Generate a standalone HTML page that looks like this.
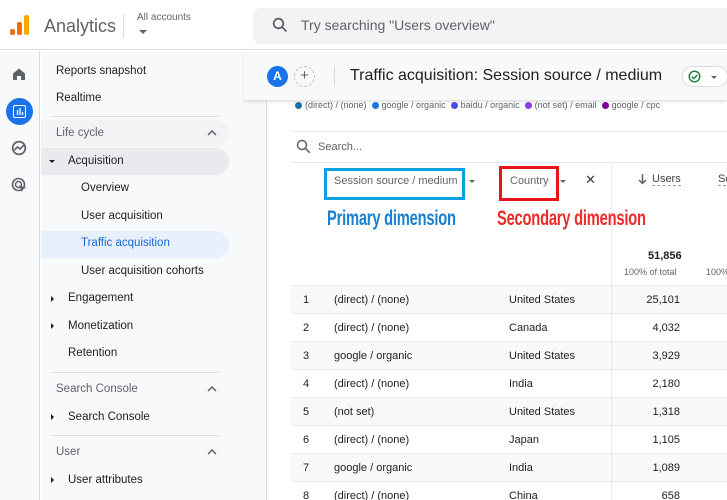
<!DOCTYPE html>
<html><head><style>
*{margin:0;padding:0;box-sizing:border-box}
html,body{width:727px;height:500px;overflow:hidden}
body{background:#fff;font-family:"Liberation Sans",Arial,sans-serif;color:#202124;position:relative}
.a{position:absolute;white-space:nowrap}
.nav{font-size:11.5px;color:#202124}
.sec{font-size:11.5px;color:#5f6368}
.row{position:absolute;left:291px;width:436px;height:28px;border-bottom:1px solid #e8eaed;font-size:11px}
.row span{position:absolute;top:8px}
.dot{display:inline-block;width:7px;height:7px;border-radius:50%;margin-right:3px;vertical-align:-0.5px}
.ann{font-size:21px;font-weight:bold;transform:scaleX(0.70);transform-origin:0 0;letter-spacing:-0.3px}
</style></head><body>
<div class="a" style="left:0;top:0;width:727px;height:50px;border-bottom:1px solid #dadce0;background:#fff"></div>
<div class="a" style="left:10px;top:29px;width:5px;height:6px;background:#e8710a;border-radius:2px"></div>
<div class="a" style="left:17px;top:22px;width:5px;height:13px;background:#e8710a;border-radius:2px"></div>
<div class="a" style="left:24px;top:15px;width:5px;height:20px;background:#f9ab00;border-radius:2px"></div>
<div class="a" style="left:44px;top:16px;font-size:18px;color:#5f6368">Analytics</div>
<div class="a" style="left:123px;top:14px;width:1px;height:24px;background:#dadce0"></div>
<div class="a" style="left:137px;top:12px;font-size:10px;color:#5f6368">All accounts</div>
<div class="a" style="left:139px;top:30px;width:0;height:0;border-left:4px solid transparent;border-right:4px solid transparent;border-top:4px solid #5f6368"></div>
<div class="a" style="left:253px;top:8px;width:474px;height:36px;background:#f1f3f4;border-radius:8px 0 0 8px"></div>
<svg class="a" style="left:272px;top:17px" width="16" height="16" viewBox="0 0 16 16"><circle cx="6.5" cy="6.5" r="4.8" fill="none" stroke="#5f6368" stroke-width="1.8"/><path d="M10 10l4.5 4.5" stroke="#5f6368" stroke-width="1.8"/></svg>
<div class="a" style="left:301px;top:17px;font-size:14px;color:#5f6368">Try searching "Users overview"</div>
<div class="a" style="left:0;top:51px;width:40px;height:449px;background:#f8f9fa;border-right:1px solid #dadce0"></div>
<svg class="a" style="left:12px;top:67px" width="14" height="14" viewBox="0 0 14 14"><path d="M1 6.5L7 1.5 13 6.5V13H9V9H5V13H1z" fill="#5f6368"/></svg>
<div class="a" style="left:6px;top:98px;width:27px;height:27px;border-radius:50%;background:#1a73e8"></div>
<div class="a" style="left:13px;top:105px;width:13px;height:13px;border:1.5px solid #fff;border-radius:2px"></div>
<svg class="a" style="left:16px;top:107px" width="8" height="8"><path d="M1.5 8V3M4 8V1M6.5 8V5" stroke="#fff" stroke-width="1.3"/></svg>
<svg class="a" style="left:11px;top:140px" width="17" height="17" viewBox="0 0 17 17"><circle cx="8" cy="8" r="6.3" fill="none" stroke="#5f6368" stroke-width="1.8"/><path d="M3.5 10l3-3 2.5 2 4-4" fill="none" stroke="#5f6368" stroke-width="1.6"/></svg>
<svg class="a" style="left:11px;top:177px" width="17" height="17" viewBox="0 0 17 17"><circle cx="7.5" cy="7.5" r="6" fill="none" stroke="#5f6368" stroke-width="1.6"/><circle cx="7.5" cy="7.5" r="3" fill="none" stroke="#5f6368" stroke-width="1.5"/><path d="M8 8l7 3-3 1-1 3z" fill="#5f6368"/></svg>
<div class="a" style="left:41px;top:51px;width:226px;height:449px;background:#f8f9fa;border-right:1px solid #dadce0"></div>
<div class="a nav" style="left:56px;top:65px">Reports snapshot</div>
<div class="a nav" style="left:56px;top:92px">Realtime</div>
<div class="a" style="left:50px;top:116px;width:169px;height:1px;background:#e0e0e0"></div>
<div class="a" style="left:41px;top:120px;width:188px;height:27px;background:#f1f3f4;border-radius:0 14px 14px 0"></div>
<div class="a sec" style="left:56px;top:127px">Life cycle</div>
<svg class="a" style="left:207px;top:130px" width="10" height="6"><path d="M1 5l4-4 4 4" fill="none" stroke="#5f6368" stroke-width="1.5"/></svg>
<div class="a" style="left:41px;top:148px;width:188px;height:27px;background:#e8eaed;border-radius:0 14px 14px 0"></div>
<div class="a" style="left:49px;top:160px;border-left:3px solid transparent;border-right:3px solid transparent;border-top:3px solid #202124"></div>
<div class="a nav" style="left:68px;top:155px">Acquisition</div>
<div class="a nav" style="left:81px;top:182px">Overview</div>
<div class="a nav" style="left:81px;top:210px">User acquisition</div>
<div class="a" style="left:41px;top:231px;width:188px;height:27px;background:#e8f0fe;border-radius:0 14px 14px 0"></div>
<div class="a nav" style="left:81px;top:237px;color:#1967d2">Traffic acquisition</div>
<div class="a nav" style="left:81px;top:265px">User acquisition cohorts</div>
<div class="a" style="left:51px;top:296px;border-top:3px solid transparent;border-bottom:3px solid transparent;border-left:3px solid #202124"></div>
<div class="a nav" style="left:68px;top:292px">Engagement</div>
<div class="a" style="left:51px;top:323px;border-top:3px solid transparent;border-bottom:3px solid transparent;border-left:3px solid #202124"></div>
<div class="a nav" style="left:68px;top:320px">Monetization</div>
<div class="a nav" style="left:68px;top:347px">Retention</div>
<div class="a" style="left:50px;top:372px;width:169px;height:1px;background:#e0e0e0"></div>
<div class="a sec" style="left:56px;top:383px">Search Console</div>
<svg class="a" style="left:207px;top:386px" width="10" height="6"><path d="M1 5l4-4 4 4" fill="none" stroke="#5f6368" stroke-width="1.5"/></svg>
<div class="a" style="left:51px;top:414px;border-top:3px solid transparent;border-bottom:3px solid transparent;border-left:3px solid #202124"></div>
<div class="a nav" style="left:68px;top:411px">Search Console</div>
<div class="a" style="left:50px;top:435px;width:169px;height:1px;background:#e0e0e0"></div>
<div class="a sec" style="left:56px;top:446px">User</div>
<svg class="a" style="left:207px;top:449px" width="10" height="6"><path d="M1 5l4-4 4 4" fill="none" stroke="#5f6368" stroke-width="1.5"/></svg>
<div class="a" style="left:51px;top:477px;border-top:3px solid transparent;border-bottom:3px solid transparent;border-left:3px solid #202124"></div>
<div class="a nav" style="left:68px;top:474px">User attributes</div>
<div class="a" style="left:244px;top:51px;width:483px;height:49px;background:#f8f9fa;box-shadow:0 2px 3px rgba(0,0,0,0.12)"></div>
<div class="a" style="left:267px;top:66px;width:21px;height:21px;border-radius:50%;background:#1a73e8;color:#fff;font-size:12px;font-weight:bold;text-align:center;line-height:21px">A</div>
<div class="a" style="left:294px;top:66px;width:21px;height:21px;border-radius:50%;border:1px dashed #bdc1c6;color:#5f6368;font-size:15px;text-align:center;line-height:18px">+</div>
<div class="a" style="left:334px;top:66px;width:1px;height:20px;background:#dadce0"></div>
<div class="a" style="left:350px;top:67px;font-size:16px;color:#202124">Traffic acquisition: Session source / medium</div>
<div class="a" style="left:682px;top:66px;width:46px;height:21px;border:1px solid #dadce0;border-radius:11px;background:#fff"></div>
<svg class="a" style="left:688px;top:70px" width="13" height="13"><circle cx="6.5" cy="6.5" r="5.3" fill="none" stroke="#188038" stroke-width="1.4"/><path d="M3.8 6.6l2 2 3.5-3.6" fill="none" stroke="#188038" stroke-width="1.4"/></svg>
<div class="a" style="left:711px;top:76px;border-left:3px solid transparent;border-right:3px solid transparent;border-top:3px solid #5f6368"></div>
<div class="a" style="left:295px;top:100px;font-size:9px;color:#5f6368">
<span class="dot" style="background:#1a73a8"></span>(direct) / (none) &nbsp;<span class="dot" style="background:#1a73e8"></span>google / organic &nbsp;<span class="dot" style="background:#4a4ae8"></span>baidu / organic &nbsp;<span class="dot" style="background:#8a3ee0"></span>(not set) / email &nbsp;<span class="dot" style="background:#7b0099"></span>google / cpc</div>
<div class="a" style="left:291px;top:131px;width:436px;height:1px;background:#e8eaed"></div>
<svg class="a" style="left:296px;top:139px" width="15" height="15" viewBox="0 0 15 15"><circle cx="6" cy="6" r="4.5" fill="none" stroke="#5f6368" stroke-width="1.5"/><path d="M9.3 9.3l4.5 4.5" stroke="#5f6368" stroke-width="1.5"/></svg>
<div class="a" style="left:318px;top:141px;font-size:11px;color:#5f6368">Search...</div>
<div class="a" style="left:291px;top:162px;width:436px;height:1px;background:#e8eaed"></div>
<div class="a" style="left:611px;top:163px;width:1px;height:337px;background:#e8eaed"></div>
<div class="a" style="left:324px;top:168px;width:141px;height:32px;border:3px solid #0ba0e0"></div>
<div class="a" style="left:334px;top:175px;font-size:11px;color:#5f6368">Session source / medium</div>
<div class="a" style="left:469px;top:180px;border-left:3px solid transparent;border-right:3px solid transparent;border-top:3px solid #5f6368"></div>
<div class="a" style="left:499px;top:166px;width:60px;height:35px;border:3px solid #e8141c"></div>
<div class="a" style="left:510px;top:175px;font-size:11px;color:#5f6368">Country</div>
<div class="a" style="left:560px;top:180px;border-left:3px solid transparent;border-right:3px solid transparent;border-top:3px solid #5f6368"></div>
<div class="a" style="left:585px;top:172px;font-size:13px;color:#3c4043">&#x2715;</div>
<div class="a ann" style="left:327px;top:207px;color:#1a80d0">Primary dimension</div>
<div class="a ann" style="left:497px;top:207px;color:#ee2a2a">Secondary dimension</div>
<svg class="a" style="left:638px;top:174px" width="9" height="11"><path d="M4.5 0v9M1 6l3.5 3.5L8 6" fill="none" stroke="#5f6368" stroke-width="1.5"/></svg>
<div class="a" style="left:652px;top:173px;font-size:11px;color:#3c4043;border-bottom:1px dashed #9aa0a6">Users</div>
<div class="a" style="left:718px;top:173px;font-size:11px;color:#3c4043;border-bottom:1px dashed #9aa0a6">Se</div>
<div class="a" style="left:648px;top:250px;font-size:11px;font-weight:bold;color:#202124">51,856</div>
<div class="a" style="left:624px;top:267px;font-size:9px;color:#5f6368">100% of total</div>
<div class="a" style="left:706px;top:267px;font-size:9px;color:#5f6368">100%</div>
<div class="a" style="left:291px;top:285px;width:436px;height:1px;background:#e8eaed"></div>
<div class="row" style="top:286px;background:#f8f9fa"><span style="left:12px">1</span><span style="left:43px">(direct) / (none)</span><span style="left:218px">United States</span><span style="right:47px">25,101</span></div>
<div class="row" style="top:314px"><span style="left:12px">2</span><span style="left:43px">(direct) / (none)</span><span style="left:218px">Canada</span><span style="right:47px">4,032</span></div>
<div class="row" style="top:342px;background:#f8f9fa"><span style="left:12px">3</span><span style="left:43px">google / organic</span><span style="left:218px">United States</span><span style="right:47px">3,929</span></div>
<div class="row" style="top:370px"><span style="left:12px">4</span><span style="left:43px">(direct) / (none)</span><span style="left:218px">India</span><span style="right:47px">2,180</span></div>
<div class="row" style="top:398px;background:#f8f9fa"><span style="left:12px">5</span><span style="left:43px">(not set)</span><span style="left:218px">United States</span><span style="right:47px">1,318</span></div>
<div class="row" style="top:426px"><span style="left:12px">6</span><span style="left:43px">(direct) / (none)</span><span style="left:218px">Japan</span><span style="right:47px">1,105</span></div>
<div class="row" style="top:454px;background:#f8f9fa"><span style="left:12px">7</span><span style="left:43px">google / organic</span><span style="left:218px">India</span><span style="right:47px">1,089</span></div>
<div class="row" style="top:482px"><span style="left:12px">8</span><span style="left:43px">(direct) / (none)</span><span style="left:218px">China</span><span style="right:47px">658</span></div>
<div class="a" style="left:611px;top:286px;width:1px;height:214px;background:#e8eaed"></div>
</body></html>
